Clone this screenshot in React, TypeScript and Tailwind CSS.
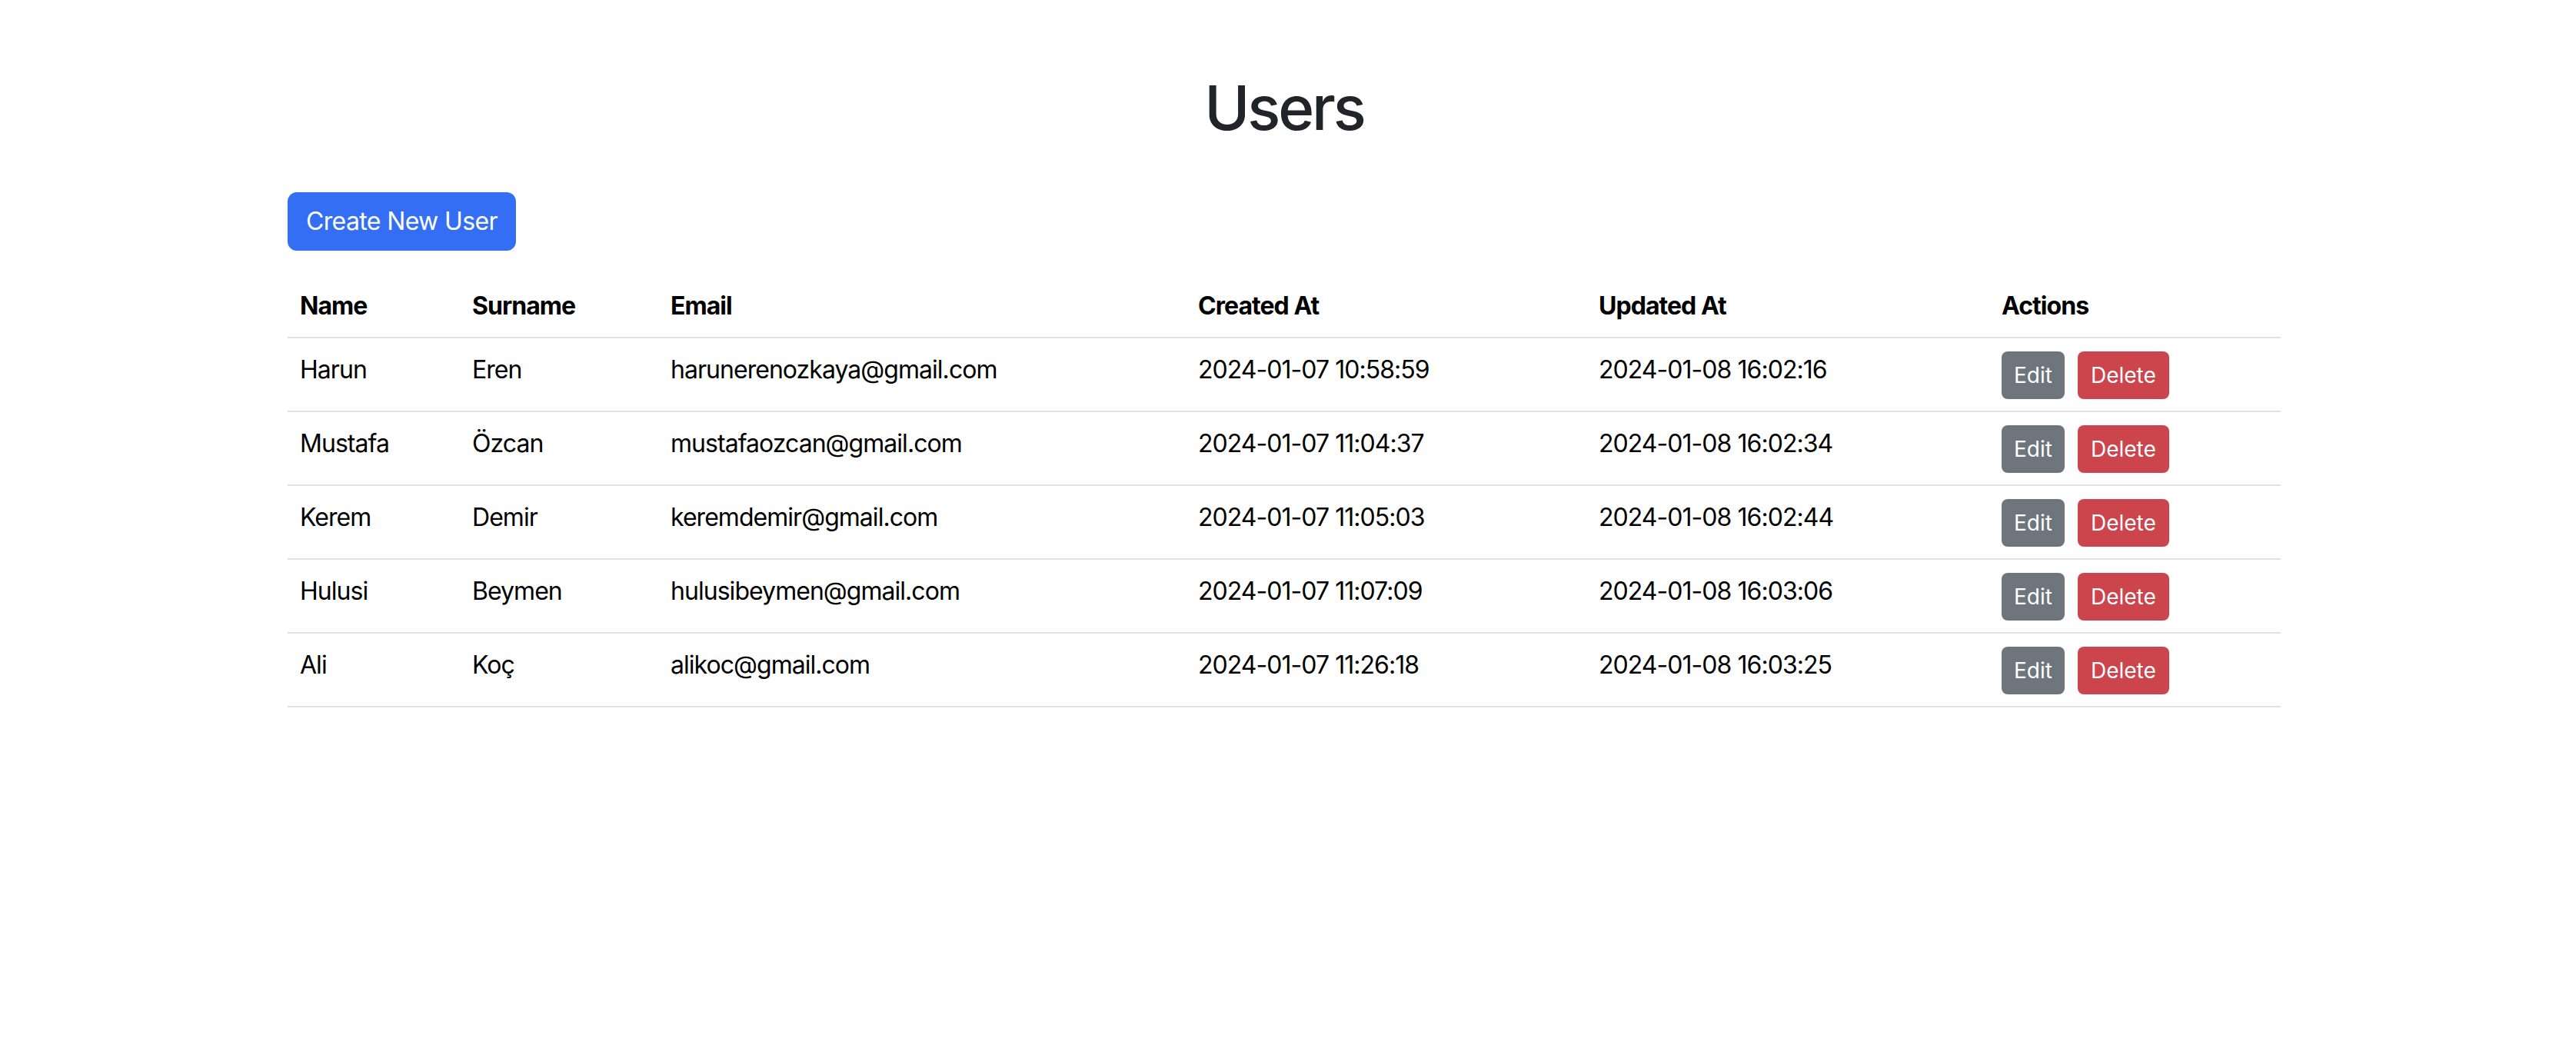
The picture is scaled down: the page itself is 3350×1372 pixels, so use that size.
import React from "react";

const users = [
  { name: "Harun", surname: "Eren", email: "harunerenozkaya@gmail.com", created: "2024-01-07 10:58:59", updated: "2024-01-08 16:02:16" },
  { name: "Mustafa", surname: "Özcan", email: "mustafaozcan@gmail.com", created: "2024-01-07 11:04:37", updated: "2024-01-08 16:02:34" },
  { name: "Kerem", surname: "Demir", email: "keremdemir@gmail.com", created: "2024-01-07 11:05:03", updated: "2024-01-08 16:02:44" },
  { name: "Hulusi", surname: "Beymen", email: "hulusibeymen@gmail.com", created: "2024-01-07 11:07:09", updated: "2024-01-08 16:03:06" },
  { name: "Ali", surname: "Koç", email: "alikoc@gmail.com", created: "2024-01-07 11:26:18", updated: "2024-01-08 16:03:25" },
];

export default function App() {
  const th = "text-left font-bold align-bottom px-[16px] py-[16px] border-b-[2px] border-[#dee2e6]";
  const td = "align-top px-[16px] pt-[17px] pb-[15px] border-b-[2px] border-[#dee2e6] whitespace-nowrap";
  return (
    <div
      className="min-h-screen bg-white pl-[374px] pt-[92px] text-black"
      style={{ fontFamily: 'Inter, "Noto Sans", sans-serif' }}
    >
      <div className="w-[2592px]">
        <h1 className="text-center text-[80px] leading-[96px] font-medium tracking-[-0.04em] text-[#212529] mb-[62px]">Users</h1>
        <button className="h-[76px] px-[24px] rounded-[12px] bg-[#346ef5] text-white text-[32px] leading-[48px] tracking-[-0.02em]">
          Create New User
        </button>
        <table className="mt-[32px] w-full table-fixed border-collapse text-[32px] leading-[48px] tracking-[-0.03em]">
          <colgroup>
            <col className="w-[224px]" />
            <col className="w-[258px]" />
            <col className="w-[686px]" />
            <col className="w-[521px]" />
            <col className="w-[524px]" />
            <col />
          </colgroup>
          <thead>
            <tr>
              <th className={th}>Name</th>
              <th className={th}>Surname</th>
              <th className={th}>Email</th>
              <th className={th}>Created At</th>
              <th className={th}>Updated At</th>
              <th className={th}>Actions</th>
            </tr>
          </thead>
          <tbody>
            {users.map((u) => (
              <tr key={u.email}>
                <td className={td}>{u.name}</td>
                <td className={td}>{u.surname}</td>
                <td className={td}>{u.email}</td>
                <td className={td}>{u.created}</td>
                <td className={td}>{u.updated}</td>
                <td className={td}>
                  <div className="flex gap-[17px] tracking-normal">
                    <button className="h-[62px] px-[16px] rounded-[8px] bg-[#6f757d] text-white text-[28px] leading-[42px]">
                      Edit
                    </button>
                    <button className="h-[62px] px-[17px] rounded-[8px] bg-[#cc444c] text-white text-[28px] leading-[42px]">
                      Delete
                    </button>
                  </div>
                </td>
              </tr>
            ))}
          </tbody>
        </table>
      </div>
    </div>
  );
}
